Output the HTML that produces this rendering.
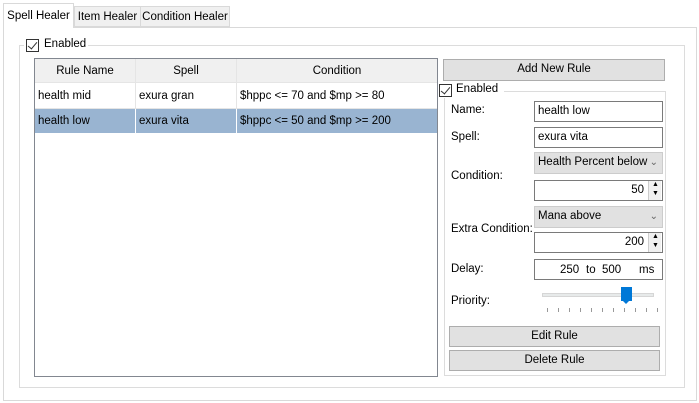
<!DOCTYPE html><html><head><style>
body{margin:0;width:699px;height:403px;background:#fff;font-family:"Liberation Sans",sans-serif;font-size:11.5px;color:#000;position:relative;overflow:hidden}
div,span{position:absolute;box-sizing:border-box;white-space:nowrap}
.tab{border:1px solid #d9d9d9;background:#f0f0f0;text-align:center;line-height:20px}
.cb{width:13px;height:13px;border:1px solid #333;background:#fff}
.cb:after{content:"";position:absolute;left:3px;top:0px;width:4px;height:8px;border:solid #333;border-width:0 1.5px 1.5px 0;transform:rotate(40deg)}
.btn{background:#e1e1e1;border:1px solid #adadad;text-align:center;line-height:19px}
.in{border:1px solid #7a7a7a;background:#fff;padding-left:3px;line-height:18px}
.cmb{border:1px solid #cccccc;background:#e1e1e1;padding-left:3px;line-height:19px}
.lbl{left:451px}
.spin{width:13px;height:19px;right:1px;top:0px;border-left:1px solid #ccc;background:#f0f0f0}
</style></head><body>
<div style="left:3px;top:27px;width:694px;height:374px;border:1px solid #d9d9d9"></div>
<div class="tab" style="left:3px;top:3px;width:71px;height:25px;background:#fff;border-bottom:none;line-height:24px">Spell Healer</div>
<div class="tab" style="left:74px;top:6px;width:67px;height:21px">Item Healer</div>
<div class="tab" style="left:140px;top:6px;width:90px;height:21px">Condition Healer</div>
<div style="left:19px;top:45px;width:666px;height:343px;border:1px solid #dcdcdc"></div>
<div style="left:24px;top:38px;width:64px;height:15px;background:#fff"></div>
<div class="cb" style="left:26px;top:39px"></div><span style="left:44px;top:38px">Enabled</span>
<div style="left:34px;top:58px;width:404px;height:319px;border:1px solid #828790;background:#fff"></div>
<div style="left:35px;top:59px;width:402px;height:24px;background:#f0f0f0;border-bottom:1px solid #e5e5e5"></div>
<div style="left:135px;top:59px;width:1px;height:74px;background:#e5e5e5"></div>
<div style="left:236px;top:59px;width:1px;height:74px;background:#e5e5e5"></div>
<span style="left:35px;top:65px;width:100px;text-align:center">Rule Name</span>
<span style="left:136px;top:65px;width:100px;text-align:center">Spell</span>
<span style="left:237px;top:65px;width:200px;text-align:center">Condition</span>
<div style="left:35px;top:108px;width:402px;height:1px;background:#e5e5e5"></div>
<span style="left:38px;top:90px">health mid</span><span style="left:139px;top:90px">exura gran</span><span style="left:240px;top:90px">$hppc &lt;= 70 and $mp &gt;= 80</span>
<div style="left:35px;top:109px;width:402px;height:24px;background:#99b4d1"></div>
<div style="left:135px;top:109px;width:1px;height:24px;background:#fff"></div><div style="left:236px;top:109px;width:1px;height:24px;background:#fff"></div>
<span style="left:38px;top:115px">health low</span><span style="left:139px;top:115px">exura vita</span><span style="left:240px;top:115px">$hppc &lt;= 50 and $mp &gt;= 200</span>
<div class="btn" style="left:443px;top:59px;width:222px;height:22px">Add New Rule</div>
<div style="left:444px;top:91px;width:222px;height:285px;border:1px solid #dcdcdc"></div>
<div style="left:438px;top:83px;width:66px;height:15px;background:#fff"></div>
<div class="cb" style="left:439px;top:84px"></div><span style="left:456px;top:83px">Enabled</span>
<span class="lbl" style="top:104px">Name:</span><div class="in" style="left:534px;top:101px;width:129px;height:21px">health low</div>
<span class="lbl" style="top:131px">Spell:</span><div class="in" style="left:534px;top:127px;width:129px;height:21px">exura vita</div>
<span class="lbl" style="top:170px">Condition:</span>
<div class="cmb" style="left:534px;top:152px;width:129px;height:22px">Health Percent below<span style="right:4px;top:0;color:#666;font-size:10px">&#8964;</span></div>
<div class="in" style="left:534px;top:180px;width:129px;height:21px;text-align:right;padding-right:18px">50<div class="spin"><span style="left:3px;top:-5px;font-size:7px">▲</span><span style="left:3px;top:4px;font-size:7px">▼</span></div></div>
<span class="lbl" style="top:223px">Extra Condition:</span>
<div class="cmb" style="left:534px;top:206px;width:129px;height:22px">Mana above<span style="right:4px;top:0;color:#666;font-size:10px">&#8964;</span></div>
<div class="in" style="left:534px;top:232px;width:129px;height:21px;text-align:right;padding-right:18px">200<div class="spin"><span style="left:3px;top:-5px;font-size:7px">▲</span><span style="left:3px;top:4px;font-size:7px">▼</span></div></div>
<span class="lbl" style="top:263px">Delay:</span>
<div class="in" style="left:534px;top:259px;width:129px;height:21px"><span style="left:25px;top:1px">250</span><span style="left:51px;top:1px">to</span><span style="left:67px;top:1px">500</span><span style="left:104px;top:1px">ms</span></div>
<span class="lbl" style="top:295px">Priority:</span>
<div style="left:542px;top:293px;width:112px;height:4px;background:#e7eaea;border:1px solid #d6d6d6"></div>
<div style="left:621px;top:287px;width:11px;height:14px;background:#0078d7"></div>
<div style="left:621px;top:299px;width:0;height:0;border-left:5.5px solid transparent;border-right:5.5px solid transparent;border-top:5px solid #0078d7"></div>
<div style="left:547px;top:308px;width:112px;height:4px;background:repeating-linear-gradient(90deg,#999 0 1px,transparent 1px 11px)"></div>
<div class="btn" style="left:449px;top:326px;width:211px;height:21px">Edit Rule</div>
<div class="btn" style="left:449px;top:350px;width:211px;height:21px">Delete Rule</div>
</body></html>
